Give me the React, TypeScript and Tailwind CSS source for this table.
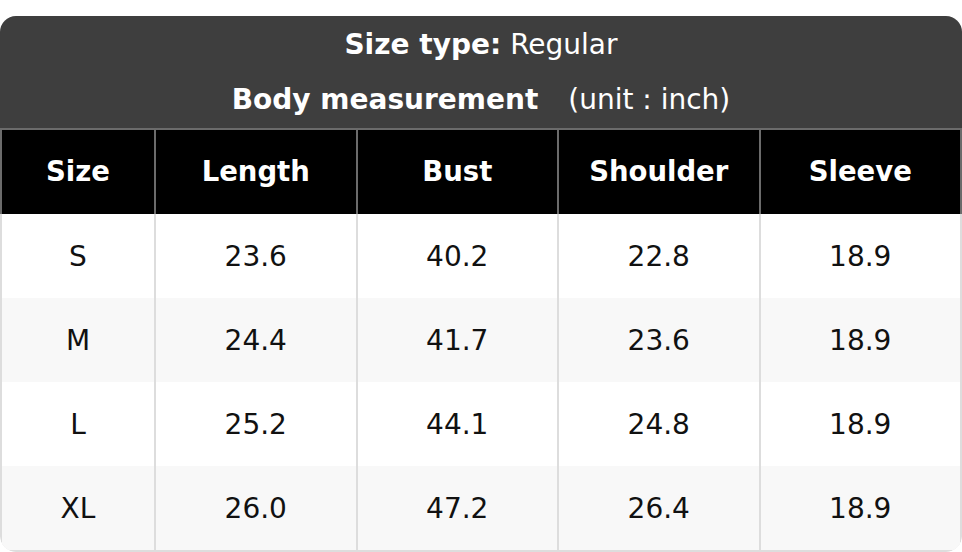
const headers = ["Size", "Length", "Bust", "Shoulder", "Sleeve"];

const rows = [
  ["S", "23.6", "40.2", "22.8", "18.9"],
  ["M", "24.4", "41.7", "23.6", "18.9"],
  ["L", "25.2", "44.1", "24.8", "18.9"],
  ["XL", "26.0", "47.2", "26.4", "18.9"],
];

const App = () => {
  return (
    <div className="w-[962px] h-[552px] bg-white pt-[16px] font-['DejaVu_Sans',sans-serif] text-[28px] leading-none">
      <div className="rounded-[16px] overflow-hidden">
        {/* Title */}
        <div className="bg-[#3e3e3e] text-white">
          <div className="h-[56px] pt-[1px] flex items-center justify-center">
            <span className="font-bold">Size type:</span>
            <span className="ml-[9px]">Regular</span>
          </div>
          <div className="h-[56px] flex items-center justify-center">
            <span className="font-bold">Body measurement</span>
            <span className="ml-[30px]">(unit : inch)</span>
          </div>
        </div>

        {/* Header row */}
        <div className="grid grid-cols-[152px_repeat(4,1fr)] h-[86px] bg-black text-white font-bold text-[27.5px] border-t-2 border-x-2 border-[#6b6b6b]">
          {headers.map((h, i) => (
            <div
              key={h}
              className={`flex items-center justify-center ${i > 0 ? "border-l-2 border-[#6b6b6b]" : ""}`}
            >
              {h}
            </div>
          ))}
        </div>

        {/* Body */}
        <div className="border-x-2 border-b-2 border-[#dddddd] rounded-b-[16px] text-[#111]">
          {rows.map((r, ri) => (
            <div
              key={r[0]}
              className={`grid grid-cols-[152px_repeat(4,1fr)] h-[84px] ${ri % 2 === 1 ? "bg-[#f8f8f8]" : "bg-white"}`}
            >
              {r.map((c, ci) => (
                <div
                  key={ci}
                  className={`flex items-center justify-center pt-[2px] ${ci > 0 ? "border-l-2 border-[#dddddd]" : ""}`}
                >
                  {c}
                </div>
              ))}
            </div>
          ))}
        </div>
      </div>
    </div>
  );
};

export default App;
